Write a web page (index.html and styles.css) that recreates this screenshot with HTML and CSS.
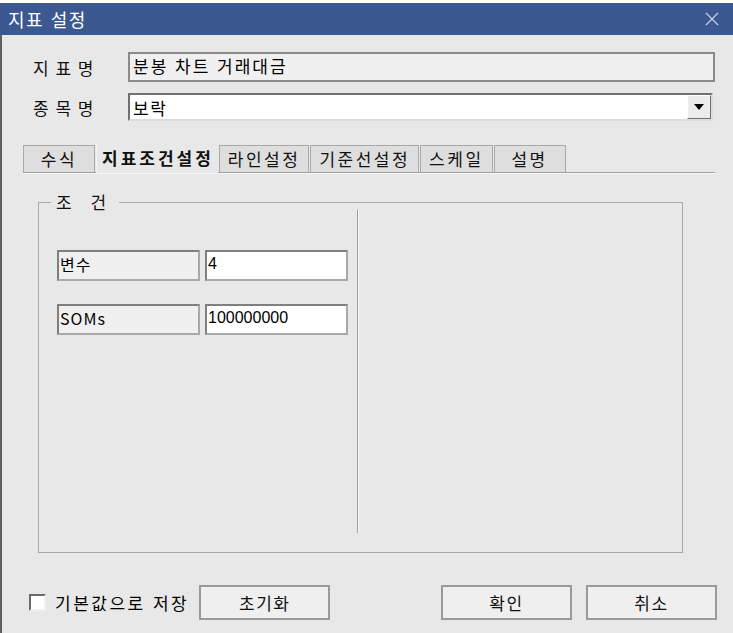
FILE: index.html
```html
<!DOCTYPE html>
<html lang="ko">
<head>
  <meta charset="UTF-8" />
  <title>지표 설정</title>
  <link rel="stylesheet" href="styles.css">
</head>
<body>

  <div class="top-strip"></div>

  <div class="titlebar">
    <span class="title">지표 설정</span>
    <svg class="close" width="14" height="14" viewBox="0 0 14 14">
      <path d="M1 1 L13 13 M13 1 L1 13" stroke="#c9d1e3" stroke-width="1.2" fill="none"/>
    </svg>
  </div>

  <div class="window">

    <div class="form-row">
      <span class="label">지 표 명</span>
      <div class="readonly">분봉 차트 거래대금</div>
    </div>

    <div class="form-row combo-row">
      <span class="label">종 목 명</span>
      <div class="combo">
        <span class="combo-text">보락</span>
        <span class="combo-btn">
          <svg width="10" height="6" viewBox="0 0 10 6"><path d="M0 0 H10 L5 6 Z" fill="#000"/></svg>
        </span>
      </div>
    </div>

    <div class="tabs">
      <div class="tab tab-formula">수식</div>
      <div class="tab active">지표조건설정</div>
      <div class="tab">라인설정</div>
      <div class="tab">기준선설정</div>
      <div class="tab">스케일</div>
      <div class="tab">설명</div>
    </div>

    <fieldset class="group">
      <legend>조 건</legend>
      <div class="group-body">
        <div class="params">
          <div class="param">
            <div class="param-name">변수</div>
            <div class="param-value">4</div>
          </div>
          <div class="param">
            <div class="param-name">SOMs</div>
            <div class="param-value">100000000</div>
          </div>
        </div>
      </div>
    </fieldset>

    <div class="footer">
      <label class="check">
        <span class="box"></span>
        <span>기본값으로 저장</span>
      </label>
      <button class="btn">초기화</button>
      <div class="spacer"></div>
      <button class="btn">확인</button>
      <button class="btn">취소</button>
    </div>

  </div>

</body>
</html>
```

FILE: styles.css
```css
body {
  margin: 0;
  width: 733px;
  height: 633px;
  overflow: hidden;
  font-family: "Noto Sans CJK KR", "Noto Sans", sans-serif;
  font-size: 17px;
  color: #000;
  background: #e8e8e8;
}

.top-strip {
  height: 3px;
  background: #fff;
}

.titlebar {
  height: 32px;
  background: #3b5891;
  display: flex;
  align-items: center;
  justify-content: space-between;
  padding: 0 14px 0 8px;
}

.title {
  color: #fff;
  font-size: 18px;
  letter-spacing: 1.5px;
}

.window {
  border-left: 2px solid #606060;
  height: 598px;
  padding-top: 17px;
  box-sizing: border-box;
}

.form-row {
  display: flex;
  align-items: center;
  padding-left: 31px;
  padding-right: 18px;
}

.label {
  width: 95px;
  letter-spacing: 1px;
  color: #111;
}

.readonly {
  flex: 1;
  height: 30px;
  box-sizing: border-box;
  border: 2px solid #8a8a8a;
  background: #f0f0f0;
  padding-left: 3px;
  line-height: 24px;
  letter-spacing: 2px;
}

.combo-row {
  margin-top: 11px;
  padding-right: 20px;
}

.combo {
  flex: 1;
  height: 28px;
  box-sizing: border-box;
  background: #fff;
  border: 2px solid;
  border-color: #707070 #dcdcdc #dcdcdc #707070;
  display: flex;
  align-items: center;
  justify-content: space-between;
  padding-left: 3px;
}

.combo-text {
  letter-spacing: 1.5px;
}

.combo-btn {
  width: 24px;
  height: 24px;
  box-sizing: border-box;
  background: #ececec;
  border: 1px solid;
  border-color: #fff #707070 #707070 #fff;
  display: flex;
  align-items: center;
  justify-content: center;
}

.tabs {
  display: flex;
  align-items: flex-end;
  margin: 22px 18px 0 21px;
  height: 29px;
  border-bottom: 1px solid #a0a0a0;
  box-shadow: 0 1px 0 #f8f8f8;
}

.tab {
  height: 27px;
  box-sizing: border-box;
  min-width: 72px;
  padding: 0 8px;
  background: #dedede;
  border: 1px solid #aaaaaa;
  border-bottom: none;
  margin-right: 1px;
  font-size: 17px;
  line-height: 25px;
  text-align: center;
  letter-spacing: 2.5px;
  color: #111;
}

.tab.active {
  height: 30px;
  margin-bottom: -1px;
  background: #e8e8e8;
  border-color: #e8e8e8;
  border-left: 1px solid #f4f4f4;
  font-weight: bold;
  letter-spacing: 3px;
  padding: 0 3px 0 5px;
  line-height: 28px;
}

.group {
  margin: 19px 0 0 36px;
  width: 645px;
  height: 361px;
  box-sizing: border-box;
  padding: 0;
  border: 1px solid #a8a8a8;
}

.group legend {
  margin-left: 12px;
  padding: 0 6px 0 5px;
  line-height: 20px;
  letter-spacing: 7px;
  color: #111;
}

.group-body {
  display: flex;
}

.params {
  width: 319px;
  height: 323px;
  border-right: 1px solid #9c9c9c;
  box-shadow: 1px 0 0 #f8f8f8;
  padding: 40px 0 0 18px;
  box-sizing: border-box;
  margin-top: -2px;
  display: flex;
  flex-direction: column;
  gap: 23px;
}

.param {
  display: flex;
  gap: 5px;
}

.param-name,
.param-value {
  width: 143px;
  height: 31px;
  box-sizing: border-box;
  border: 2px solid;
  border-color: #7f7f7f #a9a9a9 #a9a9a9 #7f7f7f;
  padding-left: 1px;
  font-size: 16px;
  line-height: 24px;
}

.param-name {
  background: #f0f0f0;
  letter-spacing: 1px;
}

.param-value {
  background: #fff;
  font-family: "Liberation Sans", Arial, sans-serif;
  font-size: 16px;
  letter-spacing: 0;
}

.footer {
  display: flex;
  align-items: center;
  margin-top: 32px;
  padding: 0 16px 0 27px;
}

.check {
  display: flex;
  align-items: center;
  gap: 9px;
  letter-spacing: 2.5px;
}

.box {
  width: 17px;
  height: 17px;
  box-sizing: border-box;
  background: #fff;
  border: 2px solid;
  border-color: #6a6a6a #f0f0f0 #f0f0f0 #6a6a6a;
}

.btn {
  width: 131px;
  height: 35px;
  margin-left: 10px;
  background: #efefef;
  border: 2px solid #9a9a9a;
  font-family: "Noto Sans CJK KR", "Noto Sans", sans-serif;
  font-size: 17px;
  letter-spacing: 1.5px;
  color: #111;
}

.spacer {
  flex: 1;
}

.btn + .btn {
  margin-left: 14px;
}
```
